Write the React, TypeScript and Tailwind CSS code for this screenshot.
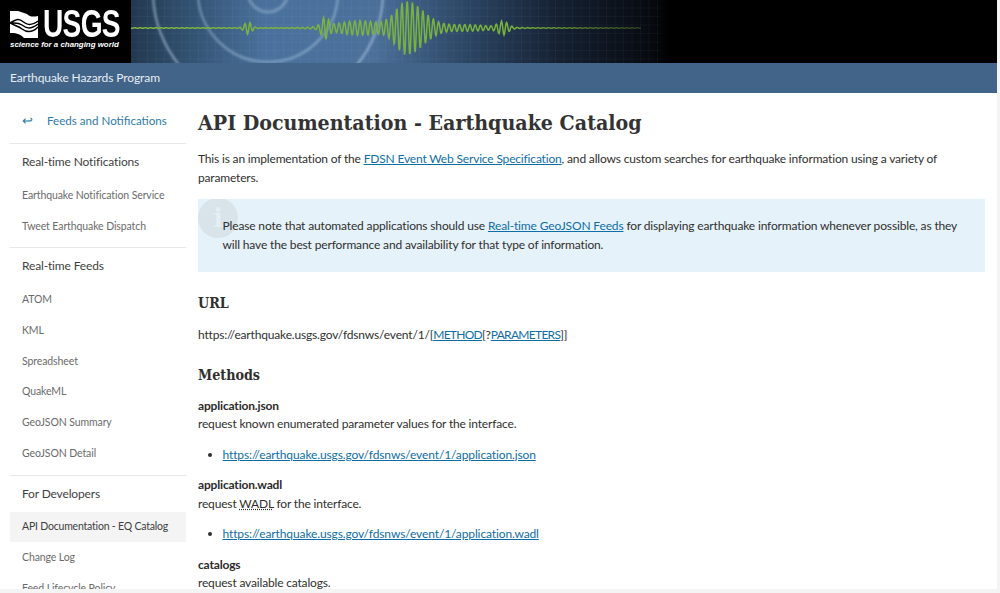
const bodyFont = "font-['Lato','Noto_Sans',sans-serif]";
const serifFont = "font-['DejaVu_Serif_Condensed','DejaVu_Serif',serif]";

function wavePoints(): string {
  // seismogram trace, amplitude grows around x=276 and tails off to the right
  const gauss = (x: number, c: number, w: number) => Math.exp(-Math.pow((x - c) / w, 2));
  const pts: string[] = [];
  for (let x = 0; x <= 510; x += 0.5) {
    const burst = 26 * gauss(x, 276, x < 276 ? 16 : 24);
    const pre = 7 * gauss(x, 228, 32);
    const tail = 3 * gauss(x, 335, 32) + 6 * gauss(x, 372, 7);
    const blips = 6 * gauss(x, 117, 5) + 9 * gauss(x, 194, 5);
    const a = burst + pre + tail + blips + 0.3;
    pts.push(`${x},${(28 + a * Math.sin(x * 1.2)).toFixed(1)}`);
  }
  return pts.join(" ");
}

function Banner() {
  return (
    <svg viewBox="0 0 539 63" className="block h-[63px] w-[539px]" preserveAspectRatio="none">
      <defs>
        <linearGradient id="bg" x1="0" x2="1" y1="0" y2="0">
          <stop offset="0" stopColor="#22384f" />
          <stop offset="0.1" stopColor="#31506f" />
          <stop offset="0.25" stopColor="#4a719d" />
          <stop offset="0.45" stopColor="#4b709a" />
          <stop offset="0.62" stopColor="#2c4665" />
          <stop offset="0.8" stopColor="#141f30" />
          <stop offset="0.96" stopColor="#070b11" />
          <stop offset="1" stopColor="#000000" />
        </linearGradient>
        <linearGradient id="trace" x1="0" x2="1" y1="0" y2="0">
          <stop offset="0" stopColor="#7cb342" />
          <stop offset="0.75" stopColor="#78b23c" />
          <stop offset="1" stopColor="#2c3d22" />
        </linearGradient>
        <pattern id="grid" width="8.5" height="8.5" patternUnits="userSpaceOnUse">
          <path d="M8.5 0V8.5M0 8.5H8.5" stroke="#ffffff" strokeOpacity="0.09" strokeWidth="0.7" fill="none" />
        </pattern>
        <filter id="soft" x="-5%" y="-5%" width="110%" height="110%">
          <feGaussianBlur stdDeviation="0.9" />
        </filter>
        <filter id="softer" x="-5%" y="-5%" width="110%" height="110%">
          <feGaussianBlur stdDeviation="0.35" />
        </filter>
      </defs>
      <rect width="539" height="63" fill="url(#bg)" />
      <rect width="530" height="63" fill="url(#grid)" />
      <g fill="none" stroke="#bcd6ee" filter="url(#soft)">
        <circle cx="137" cy="-8" r="20" strokeOpacity="0.35" strokeWidth="3" />
        <circle cx="137" cy="-8" r="70" strokeOpacity="0.4" strokeWidth="2.5" />
        <circle cx="137" cy="-8" r="115" strokeOpacity="0.5" strokeWidth="2.5" />
      </g>
      <polyline points={wavePoints()} fill="none" stroke="url(#trace)" strokeWidth="1.5" filter="url(#softer)" />
    </svg>
  );
}

function Logo() {
  return (
    <div className="flex h-[63px] w-[131px] shrink-0 flex-col bg-black pl-[10px] pt-[11px]">
      <div className="flex h-[27px] items-center">
        <svg viewBox="0 0 28 27" className="h-[27px] w-[28px] shrink-0">
          <rect width="28" height="27" fill="#fff" />
          <path d="M0 12c5-3 8-5 12-2s8 6 16 0M0 12c5 0 8-1 12 2s8 5 16-1M0 12c5 3 8 3 12 6s10 4 16-2" fill="none" stroke="#000" strokeWidth="1.5" />
          <path d="M8 0h20v5c-5 1-8 1-11-2zM0 22c5 0 9 0 14 5H0z" fill="#000" />
        </svg>
        <span className="ml-[5px] origin-left scale-x-[0.74] font-['Liberation_Sans',sans-serif] text-[38px] leading-[27px] font-bold tracking-tight text-white">USGS</span>
      </div>
      <span className="mt-[1px] font-['Liberation_Sans',sans-serif] text-[7.9px] leading-[12px] font-bold whitespace-nowrap text-white italic">science for a changing world</span>
    </div>
  );
}

function Heading({ children }: { children: string }) {
  return <div className="flex h-[34px] items-center px-3 pb-[2px] text-[12px] tracking-[-0.15px] text-[#3f3f3f]">{children}</div>;
}

function Item({ children, active }: { children: string; active?: boolean }) {
  return (
    <div className={`flex h-[30.7px] items-center px-3 pt-[1px] text-[10.5px] whitespace-nowrap ${active ? "bg-[#f4f4f4] tracking-[-0.2px] text-[#3f3f3f]" : "tracking-[-0.1px] text-[#6b6b6b]"}`}>
      {children}
    </div>
  );
}

function Sidebar() {
  return (
    <aside className="ml-[10px] w-[176px] shrink-0 pt-[13px]">
      <div className="flex h-[38px] items-center border-b border-[#e8e8e8] pb-[7px] pl-3 text-[11.6px] text-[#2f7ba6]">
        <span className="w-[25px] text-[13px]">↩</span>
        <span className="whitespace-nowrap">Feeds and Notifications</span>
      </div>
      <div className="border-b border-[#e8e8e8] pb-[6px] pt-[2px]">
        <Heading>Real-time Notifications</Heading>
        <Item>Earthquake Notification Service</Item>
        <Item>Tweet Earthquake Dispatch</Item>
      </div>
      <div className="border-b border-[#e8e8e8] pb-[6px] pt-[2px]">
        <Heading>Real-time Feeds</Heading>
        <Item>ATOM</Item>
        <Item>KML</Item>
        <Item>Spreadsheet</Item>
        <Item>QuakeML</Item>
        <Item>GeoJSON Summary</Item>
        <Item>GeoJSON Detail</Item>
      </div>
      <div className="pt-[2px]">
        <Heading>For Developers</Heading>
        <Item active>API Documentation - EQ Catalog</Item>
        <Item>Change Log</Item>
        <Item>Feed Lifecycle Policy</Item>
      </div>
    </aside>
  );
}

function A({ children, caps }: { children: string; caps?: boolean }) {
  return <a className={`text-[#0f6ea6] underline ${caps ? "tracking-[-0.7px]" : ""}`}>{children}</a>;
}

function Method({ name, children, href }: { name: string; children: React.ReactNode; href: string }) {
  return (
    <div className="mb-[12px]">
      <div className="font-bold text-[#2b2b2b]">{name}</div>
      <div>{children}</div>
      <ul className="mt-[12px] list-disc pl-[24.5px] tracking-[-0.12px]">
        <li><A>{href}</A></li>
      </ul>
    </div>
  );
}

export default function App() {
  return (
    <div className={`h-[593px] w-[1000px] overflow-hidden bg-[#f4f4f4] ${bodyFont}`}>
      <div className="h-[589px] w-[997px] overflow-hidden bg-white">
        <header className="flex h-[63px] bg-black">
          <Logo />
          <Banner />
        </header>
        <div className="flex h-[30px] items-center bg-[#426488] pl-[10px] text-[12px] tracking-[-0.1px] text-[#e6edf4]">Earthquake Hazards Program</div>
        <div className="flex">
          <Sidebar />
          <main className="ml-[12px] w-[787px] pt-[14px] text-[12px] leading-[18.5px] tracking-[-0.17px] text-[#2f2f2f]">
            <h1 className={`${serifFont} text-[21.2px] leading-[32px] font-bold tracking-normal whitespace-nowrap text-[#333]`}>API Documentation - Earthquake Catalog</h1>
            <p className="mt-[11px]">
              This is an implementation of the <A>FDSN Event Web Service Specification</A>, and allows custom searches for earthquake information using a variety of parameters.
            </p>
            <div className="relative mt-[12px] h-[73px] overflow-hidden bg-[#e6f2f9] pl-[24.5px] pr-[15px] pt-[18px] tracking-[-0.15px]">
              <div className={`absolute left-0 top-[-1px] flex h-[40px] w-[40px] items-center justify-center rounded-full bg-[#d8e4ea] ${serifFont} text-[26px] font-bold text-[#e4eff5]`}>i</div>
              <p className="relative">
                Please note that automated applications should use <A>Real-time GeoJSON Feeds</A> for displaying earthquake information whenever possible, as they will have the best performance and availability for that type of information.
              </p>
            </div>
            <h2 className={`mt-[19px] ${serifFont} text-[14.2px] leading-[24px] font-bold tracking-normal`}>URL</h2>
            <p className="mt-[11px]">https://earthquake.usgs.gov/fdsnws/event/1/[<A caps>METHOD</A>[?<A caps>PARAMETERS</A>]]</p>
            <h2 className={`mt-[18px] mb-[10px] ${serifFont} text-[14.2px] leading-[24px] font-bold tracking-normal`}>Methods</h2>
            <Method name="application.json" href="https://earthquake.usgs.gov/fdsnws/event/1/application.json">
              request known enumerated parameter values for the interface.
            </Method>
            <Method name="application.wadl" href="https://earthquake.usgs.gov/fdsnws/event/1/application.wadl">
              request <abbr className="underline decoration-dotted">WADL</abbr> for the interface.
            </Method>
            <div className="font-bold text-[#2b2b2b]">catalogs</div>
            <div>request available catalogs.</div>
          </main>
        </div>
      </div>
    </div>
  );
}
